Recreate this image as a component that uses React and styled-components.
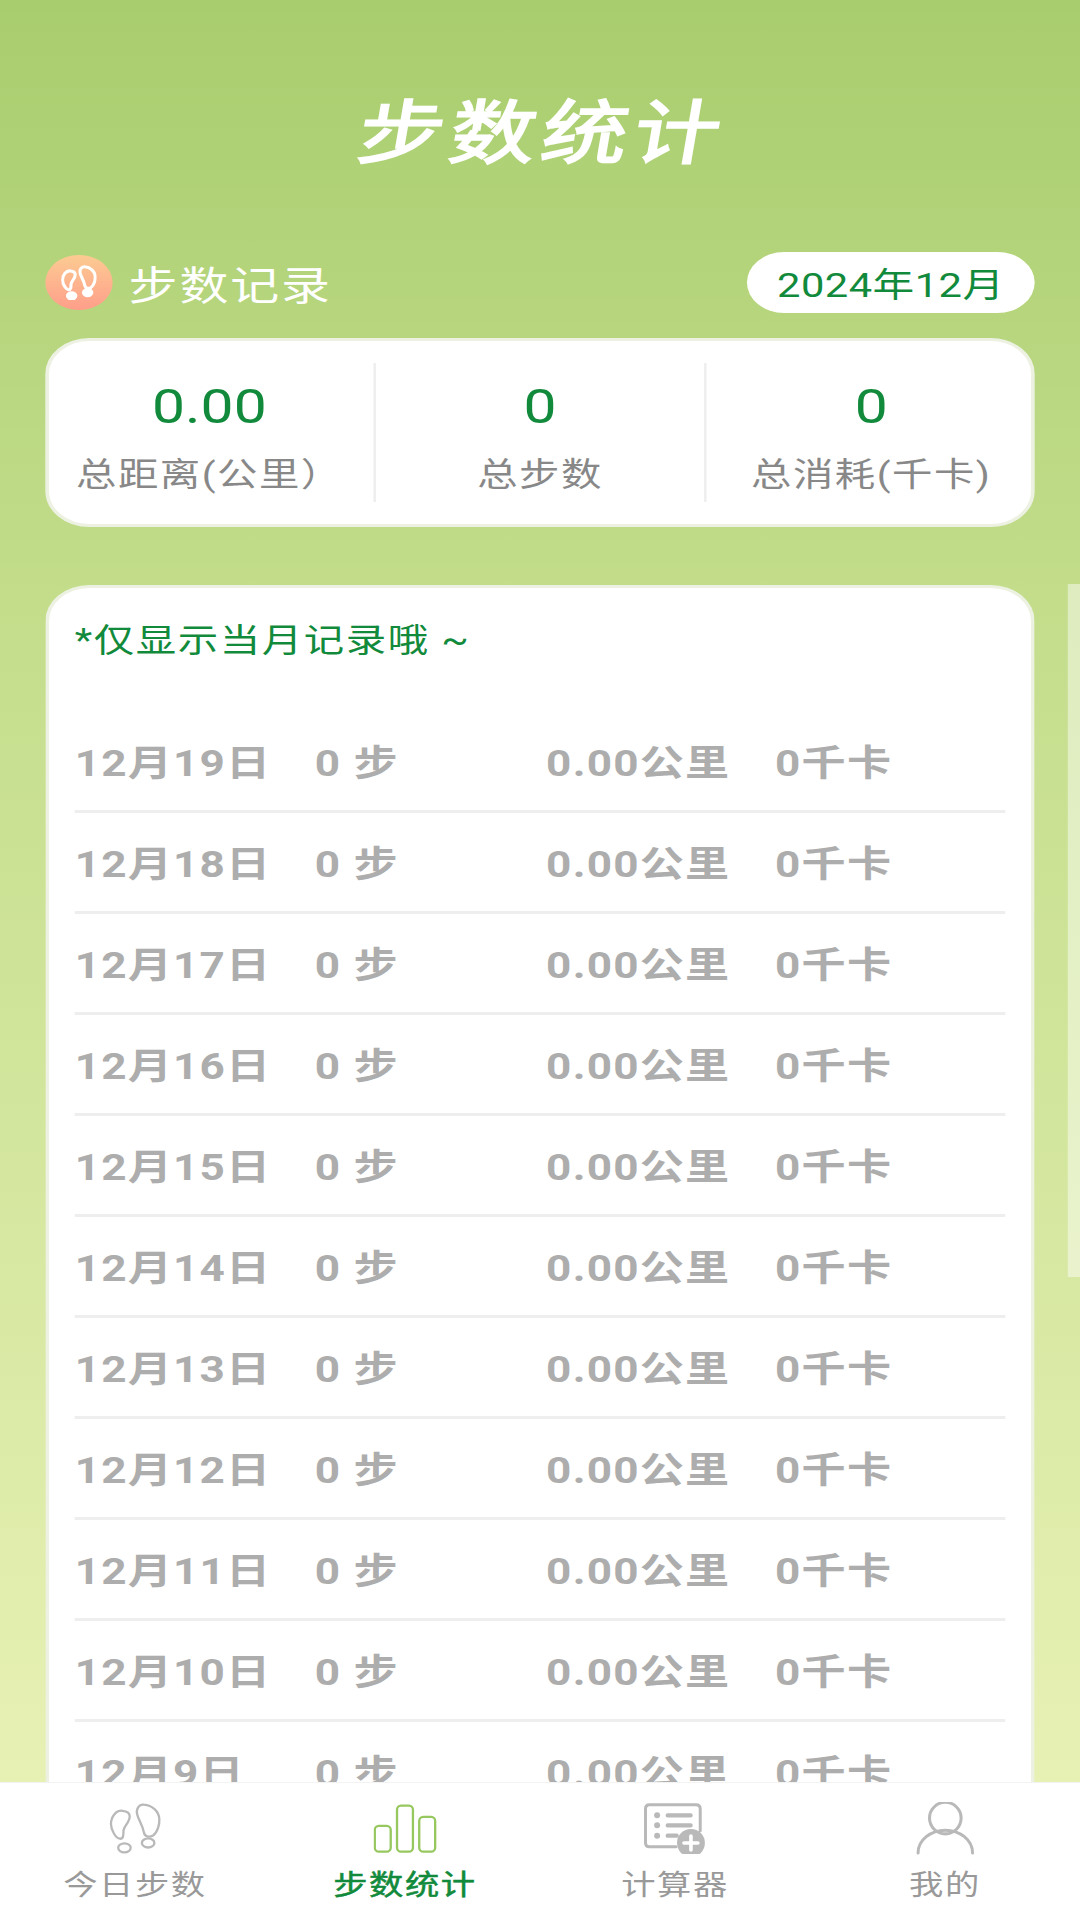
import React from 'react';
import styled, { createGlobalStyle } from 'styled-components';

const GlobalStyle = createGlobalStyle`
  html, body {
    margin: 0;
    padding: 0;
    background: #e6f0b2;
    overflow: hidden;
  }
  * {
    box-sizing: border-box;
  }
`;

// the whole page is wider than it was laid out, so it is built at 882 and stretched
const Stage = styled.div`
  width: 882px;
  height: 1920px;
  transform: scaleX(1.22449);
  transform-origin: 0 0;
  position: relative;
  display: flex;
  flex-direction: column;
  overflow: hidden;
  font-family: Roboto, 'Noto Sans CJK SC', sans-serif;
  background: linear-gradient(180deg, #a8cd6e 0%, #c3dd8b 31%, #e7f1b4 93%);
`;

const Main = styled.main`
  flex: 1;
  min-height: 0;
  overflow: hidden;
  padding: 94px 37px 0;
`;

const Title = styled.h1`
  margin: 0;
  height: 80px;
  line-height: 80px;
  text-align: center;
  color: #fff;
  font-size: 70px;
  font-weight: 400;
  letter-spacing: 5px;
  -webkit-text-stroke: 2px #fff;
  transform: translateX(2px) skewX(-8deg);
`;

const SectionRow = styled.div`
  margin-top: 78px;
  height: 61px;
  display: flex;
  align-items: center;
  justify-content: space-between;
`;

const SectionName = styled.div`
  display: flex;
  align-items: center;
  gap: 13px;
  color: #fff;
  font-size: 40px;
  letter-spacing: 1.5px;
`;

const Badge = styled.span`
  width: 55px;
  height: 55px;
  border-radius: 50%;
  display: flex;
  align-items: center;
  justify-content: center;
  background: linear-gradient(180deg, #fccb92 0%, #ff9e8a 100%);
`;

const MonthPill = styled.div`
  width: 235px;
  height: 61px;
  border-radius: 31px;
  background: #fff;
  color: #128a3c;
  font-size: 34px;
  letter-spacing: 0.4px;
  display: flex;
  align-items: center;
  justify-content: center;
`;

const StatsCard = styled.section`
  margin-top: 25px;
  height: 189px;
  padding: 22px 0;
  border: 3px solid #ecf1e2;
  border-radius: 36px;
  background: #fff;
  display: grid;
  grid-template-columns: 265px 270px 1fr;
`;

const Stat = styled.div`
  padding-top: 16px;
  display: flex;
  flex-direction: column;
  align-items: center;
  border-left: ${(p) => (p.$divided ? '2px solid #eeeeee' : 'none')};
  &:first-child {
    padding-right: 3px;
  }
  &:last-child {
    margin-right: -4px;
  }
`;

const StatValue = styled.div`
  height: 56px;
  line-height: 56px;
  font-size: 48px;
  color: #128a3c;
`;

const StatLabel = styled.div`
  margin-top: 18px;
  height: 44px;
  line-height: 44px;
  font-size: 33px;
  letter-spacing: 1.2px;
  color: #888888;
`;

const RecordCard = styled.section`
  margin-top: 58px;
  padding: 31px 21px 0;
  border: 3px solid #ecf1e2;
  border-bottom: none;
  border-radius: 36px 36px 0 0;
  background: #fff;
`;

const Note = styled.p`
  margin: 0 0 49px;
  height: 44px;
  line-height: 44px;
  font-size: 33px;
  letter-spacing: 1.3px;
  color: #128a3c;
`;

const Row = styled.div`
  height: 101px;
  padding-bottom: 2px;
  display: grid;
  grid-template-columns: 196px 189px 187px 1fr;
  align-items: center;
  border-bottom: 3px solid #eeeeee;
  color: #adadad;
  font-size: 36px;
  font-weight: 700;
  letter-spacing: 1px;
`;

const Scrollbar = styled.div`
  position: absolute;
  top: 584px;
  right: 0;
  width: 10px;
  height: 693px;
  background: rgba(255, 255, 255, 0.45);
`;

const TabBar = styled.nav`
  flex: none;
  height: 138px;
  padding-top: 19px;
  background: #fff;
  border-top: 1px solid #f3f3f3;
  display: grid;
  grid-template-columns: repeat(4, 1fr);
`;

const Tab = styled.div`
  display: flex;
  flex-direction: column;
  align-items: center;
  color: ${(p) => (p.$active ? '#128a3c' : '#999999')};
  -webkit-text-stroke: ${(p) => (p.$active ? '0.5px #128a3c' : '0')};
`;

const TabIcon = styled.span`
  height: 52px;
  display: flex;
  align-items: center;
  justify-content: center;
`;

const TabLabel = styled.span`
  margin-top: 14px;
  line-height: 36px;
  font-size: 28px;
  letter-spacing: 1.3px;
`;

// svg sizes are real pixels divided by the page stretch, so the strokes end up even
function FootIcon({ width, height, color, weight, solid }) {
  return (
    <svg width={width} height={height} viewBox="84 62 160 160" preserveAspectRatio="none" fill="none" stroke={color} strokeWidth={weight}>
      <path d="M125 89C105 87 90 108 90 130C90 150 106 174 117 175C129 176 128 160 128 150C130 135 147 125 147 106C147 94 137 90 125 89Z" />
      <path d="M190 70C175 68 165 85 170 101C175 120 185 130 190 155C192 168 205 172 218 165C232 155 238 130 237 115C236 90 215 72 190 70Z" />
      <ellipse cx="131" cy="203" rx="19" ry="14" fill={solid ? color : 'none'} />
      <ellipse cx="203" cy="188" rx="19" ry="14" fill={solid ? color : 'none'} />
    </svg>
  );
}

function BarsIcon() {
  return (
    <svg width="52" height="49" viewBox="878 68 192 148" preserveAspectRatio="none" fill="none" stroke="#96c85f" strokeWidth="7">
      <rect x="882" y="134" width="48" height="78" rx="12" />
      <rect x="949" y="73" width="48" height="139" rx="12" />
      <rect x="1016" y="107" width="48" height="105" rx="12" />
    </svg>
  );
}

function CalcIcon() {
  return (
    <svg width="52" height="52" viewBox="68 64 192 156" preserveAspectRatio="none" fill="none" stroke="#b9b9b9" strokeLinecap="round">
      <path d="M241 150V84C241 76 236 72 228 72H88C80 72 76 76 76 84V186C76 194 80 198 88 198H168" strokeWidth="9" />
      <circle cx="111" cy="104" r="9" fill="#b9b9b9" stroke="none" />
      <circle cx="111" cy="134" r="9" fill="#b9b9b9" stroke="none" />
      <circle cx="111" cy="165" r="9" fill="#b9b9b9" stroke="none" />
      <path d="M143 104H212M143 134H212M143 165H170" strokeWidth="13" />
      <circle cx="213" cy="187" r="42" fill="#b9b9b9" stroke="none" />
      <path d="M192 187H234M213 166V208" stroke="#fff" strokeWidth="11" />
    </svg>
  );
}

function UserIcon() {
  return (
    <svg width="50" height="53" viewBox="882 62 182 158" preserveAspectRatio="none" fill="none" stroke="#b9b9b9" strokeWidth="9" strokeLinecap="round">
      <circle cx="973" cy="110" r="47" />
      <path d="M892 214C892 175 930 146 973 146C1016 146 1054 175 1054 214" />
    </svg>
  );
}

const days = [19, 18, 17, 16, 15, 14, 13, 12, 11, 10, 9];

export default function App() {
  return (
    <Stage>
      <GlobalStyle />
      <Main>
        <Title>步数统计</Title>
        <SectionRow>
          <SectionName>
            <Badge>
              <FootIcon width={29} height={35} color="#fff" weight={14} solid />
            </Badge>
            步数记录
          </SectionName>
          <MonthPill>2024年12月</MonthPill>
        </SectionRow>
        <StatsCard>
          <Stat>
            <StatValue>0.00</StatValue>
            <StatLabel>总距离(公里）</StatLabel>
          </Stat>
          <Stat $divided>
            <StatValue>0</StatValue>
            <StatLabel>总步数</StatLabel>
          </Stat>
          <Stat $divided>
            <StatValue>0</StatValue>
            <StatLabel>总消耗(千卡)</StatLabel>
          </Stat>
        </StatsCard>
        <RecordCard>
          <Note>*仅显示当月记录哦 ~</Note>
          {days.map((day) => (
            <Row key={day}>
              <span>12月{day}日</span>
              <span>0 步</span>
              <span>0.00公里</span>
              <span>0千卡</span>
            </Row>
          ))}
        </RecordCard>
      </Main>
      <Scrollbar />
      <TabBar>
        <Tab>
          <TabIcon>
            <FootIcon width={43} height={52} color="#b9b9b9" weight={7} />
          </TabIcon>
          <TabLabel>今日步数</TabLabel>
        </Tab>
        <Tab $active>
          <TabIcon>
            <BarsIcon />
          </TabIcon>
          <TabLabel>步数统计</TabLabel>
        </Tab>
        <Tab>
          <TabIcon>
            <CalcIcon />
          </TabIcon>
          <TabLabel>计算器</TabLabel>
        </Tab>
        <Tab>
          <TabIcon>
            <UserIcon />
          </TabIcon>
          <TabLabel>我的</TabLabel>
        </Tab>
      </TabBar>
    </Stage>
  );
}
